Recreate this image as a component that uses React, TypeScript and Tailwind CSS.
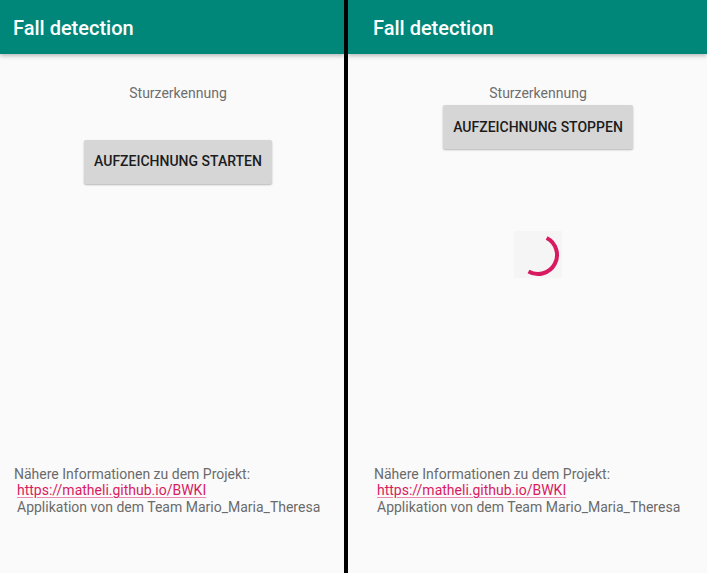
import React from "react";

const font = { fontFamily: "Roboto, 'Noto Sans', sans-serif" };

function Header({ right }: { right?: boolean }) {
  return (
    <div className="relative z-10 h-[54px] w-full shrink-0 bg-[#00877a] shadow-[0_2px_4px_rgba(0,0,0,0.25)] flex items-center">
      <div className={right ? "text-[20px] font-medium text-white leading-none pl-[25px] pt-[1px]" : "text-[20px] font-medium text-white leading-none pl-[13px] pt-[1px]"}>Fall detection</div>
    </div>
  );
}

function Footer() {
  return (
    <div className="pl-[14px] text-[14px] leading-[16.5px] text-[#6b6b6b]">
      <div>Nähere Informationen zu dem Projekt:</div>
      <div className="pl-[3px]">
        <span className="text-[#d81b60] underline decoration-[#e98bb0] underline-offset-[2px]">https://matheli.github.io/BWKI</span>
      </div>
      <div className="pl-[3px]">Applikation von dem Team Mario_Maria_Theresa</div>
    </div>
  );
}

function Button({ label }: { label: string }) {
  return (
    <div className="h-[44px] px-[10px] flex items-center justify-center rounded-[2px] bg-[#d6d6d6] shadow-[0_1px_2px_rgba(0,0,0,0.28)] text-[14px] font-medium text-[#1c1c1c]">
      {label}
    </div>
  );
}

function Spinner() {
  return (
    <div className="w-[48px] h-[47px] bg-[#f5f5f5] flex items-center justify-center">
      <svg width="48" height="48" viewBox="0 0 48 48">
        <path d="M32.63 7.07 A19 19 0 1 1 14.5 40.45" fill="none" stroke="#d81b60" strokeWidth="4" />
      </svg>
    </div>
  );
}

export default function App() {
  return (
    <div className="flex w-[707px] h-[573px] overflow-hidden bg-black" style={font}>
      <div className="w-[344px] h-full shrink-0 bg-[#fafafa] flex flex-col overflow-hidden">
        <Header />
        <div className="w-[356px] flex flex-col flex-1">
          <div className="mt-[31px] text-center text-[14px] leading-[16.5px] text-[#6e6e6e]">Sturzerkennung</div>
          <div className="mt-[38px] flex justify-center">
            <Button label="AUFZEICHNUNG STARTEN" />
          </div>
          <div className="mt-auto mb-[58px]">
            <Footer />
          </div>
        </div>
      </div>
      <div className="w-[4px] shrink-0" />
      <div className="w-[359px] h-full shrink-0 bg-[#fafafa] flex flex-col overflow-hidden">
        <Header right />
        <div className="ml-[12px] w-[356px] flex flex-col flex-1">
          <div className="mt-[31px] text-center text-[14px] leading-[16.5px] text-[#6e6e6e]">Sturzerkennung</div>
          <div className="mt-[3.5px] flex justify-center">
            <Button label="AUFZEICHNUNG STOPPEN" />
          </div>
          <div className="mt-[82px] flex justify-center">
            <Spinner />
          </div>
          <div className="mt-auto mb-[58px]">
            <Footer />
          </div>
        </div>
      </div>
    </div>
  );
}
